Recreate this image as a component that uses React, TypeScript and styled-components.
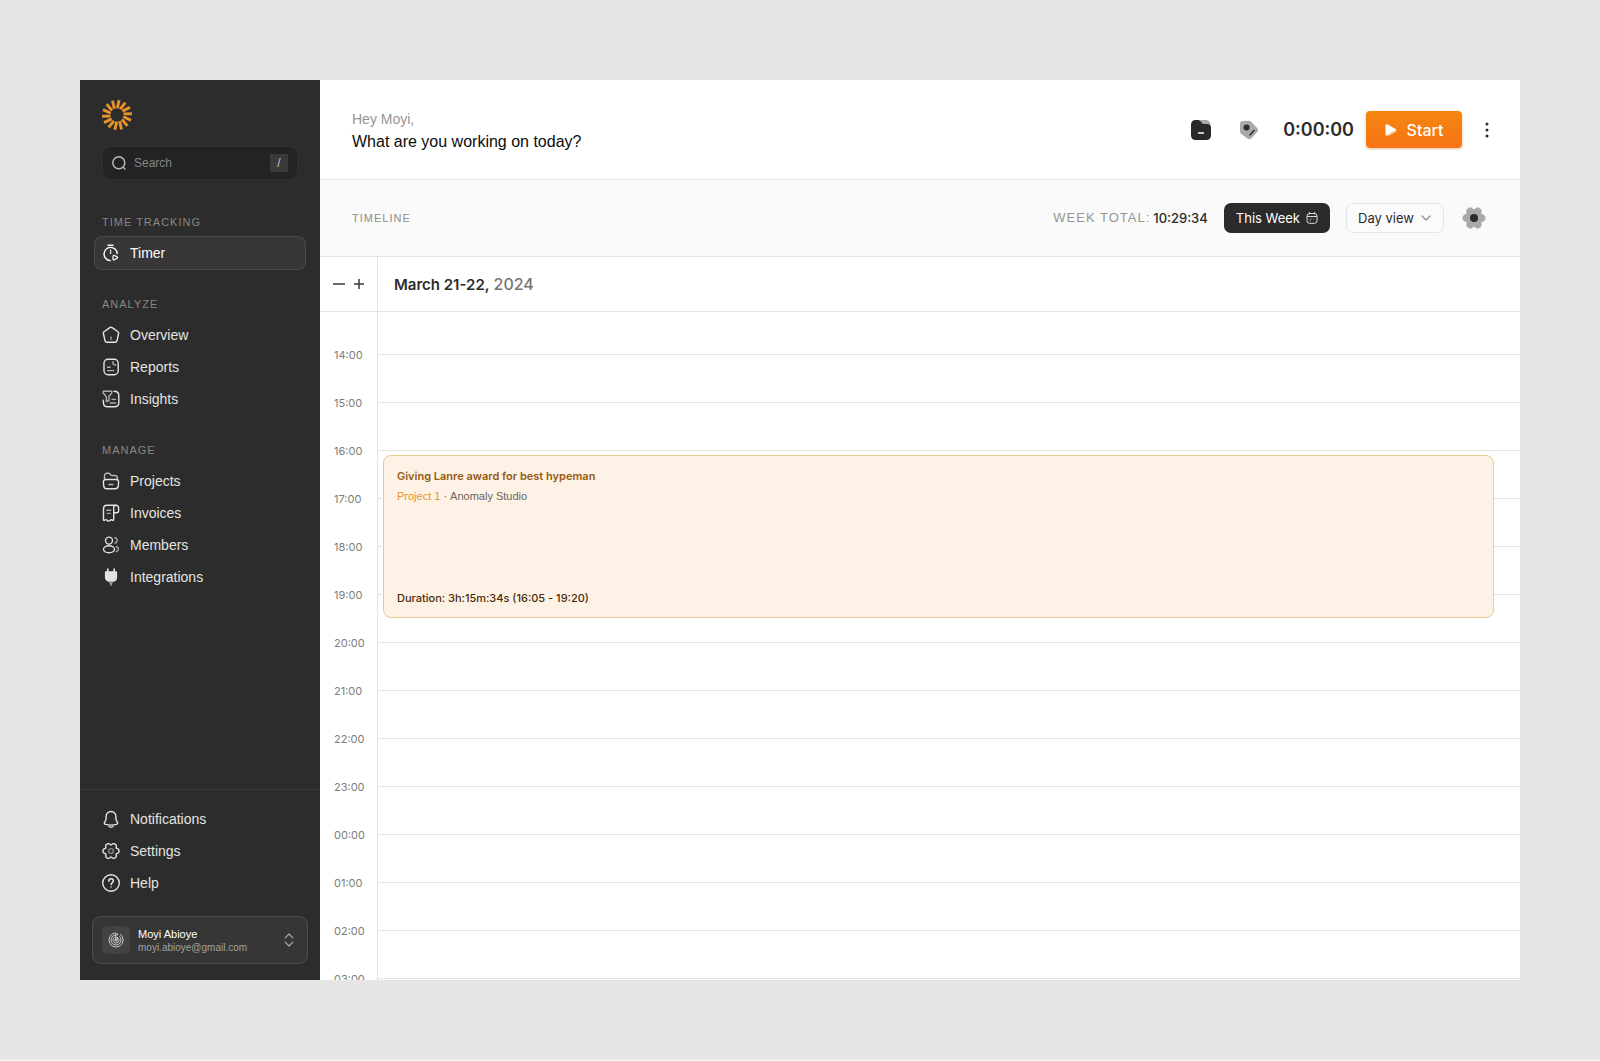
import React from "react";
import styled, { createGlobalStyle, css } from "styled-components";

const sans = `"Liberation Sans", Arial, sans-serif`;
const inter = `Inter, "Liberation Sans", sans-serif`;

const GlobalStyle = createGlobalStyle`
  *, *::before, *::after { box-sizing: border-box; }
  body { margin: 0; background: #fafafa; font-family: ${sans}; color: #2c2c2c; }
  button, input, select { font: inherit; color: inherit; margin: 0; }
  button { padding: 0; border: 0; background: none; cursor: pointer; }
  h1, h2, p { margin: 0; font-weight: 400; }
  svg { display: block; flex-shrink: 0; }
`;

const Page = styled.div`
  height: calc(100vh - 1px);
  padding: 80px;
  background: #e6e6e6;
`;

const Shell = styled.div`
  display: grid;
  grid-template-columns: 240px minmax(0, 1fr);
  height: 100%;
  min-height: 720px;
  overflow: hidden;
  background: #fff;
`;

/* ---------- Sidebar ---------- */

const Sidebar = styled.aside`
  display: flex;
  flex-direction: column;
  min-height: 0;
  padding: 20px 0 16px;
  background: #2c2c2c;
  color: #e4e4e0;
`;

const Brand = styled.a`
  align-self: flex-start;
  margin: 0 22px 16px;
  color: #e8922a;
`;

const SearchBox = styled.label`
  display: flex;
  align-items: center;
  gap: 8px;
  height: 34px;
  margin: 0 22px 34px;
  padding: 0 9px;
  border: 1px solid #313131;
  border-radius: 8px;
  background: #232323;
  color: #b9b9b5;
`;

const SearchInput = styled.input`
  flex: 1;
  min-width: 0;
  padding: 0;
  border: 0;
  outline: 0;
  background: none;
  font-size: 12px;
  line-height: 16px;
  &::placeholder { color: #858582; opacity: 1; }
`;

const Key = styled.kbd`
  width: 18px;
  height: 18px;
  background: #3a3a3a;
  color: #c4c4c0;
  font-family: ${sans};
  font-size: 12px;
  line-height: 18px;
  text-align: center;
`;

const NavGroup = styled.nav`
  display: flex;
  flex-direction: column;
  margin-bottom: 27px;
  padding: 0 15px;
`;

const NavHeading = styled.h2`
  margin-bottom: 7px;
  padding-left: 7px;
  color: #888883;
  font-size: 11px;
  letter-spacing: 1px;
  line-height: 16px;
`;

const NavLink = styled.a<{ $active?: boolean }>`
  display: flex;
  align-items: center;
  gap: 10px;
  height: 32px;
  padding: 0 7px;
  border-radius: 7px;
  color: inherit;
  font-size: 14px;
  line-height: 20px;
  text-decoration: none;
  ${(p) =>
    p.$active &&
    css`
      background: #383636;
      box-shadow: 0 0 0 1px #4a4a49;
      color: #fff;
    `}
`;

const SidebarFooter = styled.div`
  margin-top: auto;
  padding-top: 13px;
  border-top: 1px solid #3b3b3b;
`;

const FooterNav = styled(NavGroup)`
  margin-bottom: 17px;
`;

const Account = styled.button`
  display: flex;
  align-items: center;
  gap: 8px;
  width: calc(100% - 24px);
  height: 48px;
  margin: 0 12px;
  padding: 0 13px 0 9px;
  border: 1px solid #4a4a4a;
  border-radius: 8px;
  background: #363636;
  text-align: left;
`;

const Avatar = styled.span`
  display: grid;
  place-items: center;
  width: 28px;
  height: 28px;
  border-radius: 5px;
  background: #434343;
  color: #cfcfcb;
`;

const AccountText = styled.span`
  display: grid;
  flex: 1;
  min-width: 0;
  padding-top: 2px;
  color: #a3a3a0;
  font-size: 10px;
  line-height: 14px;
`;

const AccountName = styled.span`
  color: #fff;
  font-size: 11px;
`;

/* ---------- Main column ---------- */

const Main = styled.main`
  display: flex;
  flex-direction: column;
  min-width: 0;
  min-height: 0;
`;

const TopBar = styled.header`
  display: flex;
  align-items: center;
  flex-shrink: 0;
  height: 100px;
  padding: 0 20px 0 32px;
  border-bottom: 1px solid #e4e4e4;
`;

const Greeting = styled.div`
  margin-right: auto;
  padding-top: 2px;
`;

const Hello = styled.p`
  color: #959592;
  font-size: 14px;
  line-height: 22px;
`;

const Prompt = styled.h1`
  color: #0c0c0c;
  font-size: 16px;
  line-height: 24px;
`;

const Tools = styled.div`
  display: flex;
  align-items: center;
  gap: 28px;
  margin-right: 24px;
`;

const Clock = styled.time`
  margin-right: 12px;
  font-family: ${inter};
  font-size: 18px;
  font-weight: 600;
  line-height: 24px;
`;

const StartButton = styled.button`
  display: flex;
  align-items: center;
  justify-content: center;
  gap: 10px;
  min-width: 96px;
  height: 37px;
  margin-right: 12px;
  border-radius: 4px;
  background: linear-gradient(#f3860f, #f97415);
  box-shadow: 0 1px 3px rgba(190, 100, 20, 0.4);
  color: #fff;
  font-family: ${inter};
  font-size: 16px;
  font-weight: 500;
`;

const IconButton = styled.button<{ $size: number }>`
  display: grid;
  place-items: center;
  width: ${(p) => p.$size}px;
  height: ${(p) => p.$size}px;
`;

const Toolbar = styled.section`
  display: flex;
  align-items: center;
  gap: 16px;
  flex-shrink: 0;
  height: 77px;
  padding: 0 32px;
  border-bottom: 1px solid #e4e4e4;
  background: #fafafa;
`;

const ToolbarTitle = styled.h2`
  margin-right: auto;
  color: #8e8e8a;
  font-size: 11px;
  letter-spacing: 1px;
  line-height: 16px;
`;

const WeekTotal = styled.p`
  display: flex;
  gap: 3px;
  color: #969692;
  font-size: 13px;
  letter-spacing: 1px;
  line-height: 20px;
`;

const WeekTotalValue = styled.span`
  color: #2c2c2c;
  font-family: ${inter};
  font-weight: 500;
  letter-spacing: normal;
`;

const RangeButton = styled.button`
  display: flex;
  align-items: center;
  justify-content: space-between;
  gap: 6px;
  min-width: 106px;
  height: 30px;
  padding: 0 12px;
  border-radius: 7px;
  background: #2b2b2b;
  color: #fff;
  font-family: ${inter};
  font-size: 13px;
`;

const SelectBox = styled.div`
  display: grid;
  align-items: center;
  min-width: 98px;
  height: 30px;
  border: 1px solid #e6e6e6;
  border-radius: 7px;
  background: #fbfbfb;
  svg { grid-area: 1 / 1; justify-self: end; margin-right: 12px; pointer-events: none; }
`;

const ViewSelect = styled.select`
  grid-area: 1 / 1;
  height: 28px;
  padding: 0 28px 0 11px;
  border: 0;
  outline: 0;
  appearance: none;
  background: none;
  font-family: ${inter};
  font-size: 13px;
`;

const DateRow = styled.section`
  display: grid;
  grid-template-columns: 58px minmax(0, 1fr);
  flex-shrink: 0;
  height: 55px;
  border-bottom: 1px solid #e4e4e4;
`;

const ZoomControls = styled.div`
  display: flex;
  align-items: center;
  justify-content: center;
  gap: 4px;
  border-right: 1px solid #e4e4e4;
`;

const DateTitle = styled.h2`
  display: flex;
  align-items: baseline;
  gap: 4px;
  align-self: center;
  padding-left: 16px;
  font-family: ${inter};
  font-size: 15px;
  font-weight: 600;
  line-height: 24px;
`;

const Year = styled.span`
  color: #777774;
  font-size: 16px;
  font-weight: 500;
`;

const Calendar = styled.section`
  display: grid;
  grid-template-columns: 58px minmax(0, 1fr);
  flex: 1;
  min-height: 0;
  overflow: hidden;
`;

const Hours = styled.div`
  padding-top: 19px;
  border-right: 1px solid #e4e4e4;
`;

const HourLabel = styled.div`
  height: 48px;
  padding-left: 14px;
  color: #7d7d7a;
  font-family: ${inter};
  font-size: 11px;
  line-height: 48px;
`;

const Lanes = styled.div`
  position: relative;
  padding-top: 42px;
`;

const Lane = styled.div`
  height: 48px;
  border-top: 1px solid #e4e4e4;
`;

const EventCard = styled.article`
  position: absolute;
  top: 143px;
  right: 26px;
  left: 5px;
  display: flex;
  flex-direction: column;
  height: 163px;
  padding: 10px 13px 9px;
  border: 1px solid #ebcb94;
  border-radius: 8px;
  background: #fef1e5;
  font-size: 11px;
  line-height: 20px;
`;

const EventTitle = styled.h2`
  color: #955b12;
  font-family: ${inter};
  font-size: 11px;
  font-weight: 600;
`;

const EventMeta = styled.p`
  display: flex;
  gap: 3px;
  color: #6b655e;
`;

const EventProject = styled.span`
  color: #e8922a;
`;

const EventDuration = styled.p`
  margin-top: auto;
  color: #4a2c07;
  font-family: ${inter};
  font-weight: 500;
`;

/* ---------- Icons ---------- */

/* Six broad petals with narrow notches between them. */
function gearPath(cx: number, cy: number, radius: number, depth: number) {
  const steps = 144;
  const points = Array.from({ length: steps }, (_, i) => {
    const a = (i / steps) * Math.PI * 2;
    const r = radius - depth * Math.pow(Math.abs(Math.sin(3 * a)), 4);
    return `${(cx + r * Math.cos(a)).toFixed(2)} ${(cy + r * Math.sin(a)).toFixed(2)}`;
  });
  return `M${points.join("L")}Z`;
}

const Logo = () => (
  <svg width="30" height="30" viewBox="-15 -15 30 30" stroke="currentColor" strokeWidth="2.9">
    {Array.from({ length: 14 }, (_, i) => (
      <path key={i} d="M-.5-6.6L.3-15" transform={`rotate(${7 + (i * 360) / 14})`} />
    ))}
  </svg>
);

const Glyph = ({ children }: { children: React.ReactNode }) => (
  <svg
    width="18"
    height="18"
    viewBox="0 0 18 18"
    fill="none"
    stroke="currentColor"
    strokeWidth="1.4"
    strokeLinecap="round"
    strokeLinejoin="round"
    aria-hidden="true"
  >
    {children}
  </svg>
);

const SearchIcon = () => (
  <svg width="14" height="14" viewBox="0 0 14 14" fill="none" stroke="currentColor" strokeWidth="1.5" strokeLinecap="round">
    <circle cx="6.8" cy="6.8" r="6" />
    <path d="M11.2 11.2L13 13" />
  </svg>
);

const TimerIcon = () => (
  <Glyph>
    <path d="M6 1.200h5M8.200 16.600A6.600 6.600 0 1 1 15.200 9.500" />
    <path d="M8.600 6.200v3.400" opacity=".8" />
    <path d="M11 12.300c0-.9.700-1.200 1.500-.8l2.600 1.400c.7.400.7 1 0 1.400l-2.600 1.500c-.8.400-1.500 0-1.500-.8z" strokeWidth="1.200" />
  </Glyph>
);

const HomeIcon = () => (
  <Glyph>
    <path d="M7.800 1.600L2 5.800c-.7.500-.8 1-.6 1.700l1.600 7.200c.2 1.100.8 1.600 1.900 1.600h8.200c1.100 0 1.700-.5 1.900-1.600l1.600-7.200c.2-.7.1-1.200-.6-1.700l-5.800-4.200c-.9-.6-1.500-.6-2.400 0z" />
    <path d="M9 11v2.600" opacity=".6" />
  </Glyph>
);

const ReportIcon = () => (
  <Glyph>
    <rect x="2" y="1.200" width="14.200" height="15.600" rx="4" />
    <path d="M11 3.600v1.600c0 1.100.6 1.700 1.700 1.700h1.200M5.600 9.200H8M5.600 12.600h6" opacity=".75" />
  </Glyph>
);

const InsightIcon = () => (
  <Glyph>
    <path d="M12 1.200c3.200 0 4.800 1.200 4.800 4.300v7c0 2.900-1.400 4.300-4.300 4.300h-7c-2.900 0-4.100-1.400-4.100-4.300v-2.300" />
    <path d="M1.200 1.200h8.600v1.700L7 6.500v4l-2.600 1.200V6.800L1.200 3zM10 9.400h3.600M8.200 13h5.400" opacity=".7" />
  </Glyph>
);

const ProjectIcon = () => (
  <Glyph>
    <path d="M2.500 7.500V4c0-1.700.9-2.700 2.600-2.700h1.300c1.200 0 1.500.5 2.100 1.300.5.700.9.900 1.700.9h2.300c2 0 3 .9 3 2.700v1.300" opacity=".75" />
    <path d="M4 7.500h10c1.800 0 2.800 1 2.600 2.800l-.3 3.600c-.2 1.900-1.100 2.800-2.900 2.800H4.600c-1.800 0-2.700-.9-2.900-2.800l-.3-3.600C1.200 8.500 2.200 7.500 4 7.500z" />
    <path d="M7 12.500h4" opacity=".75" />
  </Glyph>
);

const InvoiceIcon = () => (
  <Glyph>
    <path d="M13.800 1.200H5C2.500 1.200 1.500 2.300 1.500 4.800v10.500c0 1.300.5 1.600 1.400.8.800-.7 1.300-.7 2 0l1 .8c.6.400.9.400 1.500 0l1-.8c.700-.6 1.200-.6 2 0 .8.600 1.300.3 1.300-.8V3.400c0-1.500.8-2.200 2.100-2.200z" />
    <path d="M13.800 1.200c1.800 0 2.800 1.100 2.800 2.800v2.700c0 1.300-.8 2-2 2h-2.900" />
    <path d="M4.800 6.300h4M5.300 9.400h3" opacity=".65" />
  </Glyph>
);

const MembersIcon = () => (
  <Glyph>
    <circle cx="7" cy="4.600" r="3.500" />
    <ellipse cx="7" cy="13.300" rx="5.500" ry="3.500" />
    <path d="M12.800 1.800c3 .4 3 4.800 0 5.200M14.200 10.800c3 .5 3 3.800.1 4.700" opacity=".65" />
  </Glyph>
);

const PlugIcon = () => (
  <Glyph>
    <path d="M5.800 1V4M12.200 1V4" strokeWidth="1.600" />
    <path d="M3.600 4h10.800v5.200c0 2.300-1.500 3.800-3.800 3.800H7.400c-2.300 0-3.800-1.500-3.800-3.800z" fill="currentColor" />
    <path d="M6.500 14.200h5L9.800 16v1.800H8.200V16z" fill="currentColor" stroke="none" opacity=".65" />
  </Glyph>
);

const BellIcon = () => (
  <Glyph>
    <path d="M9 1.500a4.900 4.900 0 0 0-4.900 4.900v2.400c0 .6-.2 1.200-.5 1.700l-1 1.700c-.6 1.100-.2 1.900 1 2.200 3.500 1 7.300 1 10.800 0 1.200-.3 1.600-1.200 1-2.200l-1-1.700c-.3-.5-.5-1.100-.5-1.700V6.400A4.900 4.900 0 0 0 9 1.500z" />
    <path d="M7 16.500c1.200.8 2.800.8 4 0" />
  </Glyph>
);

const SettingsIcon = () => (
  <Glyph>
    <path d={gearPath(9, 9, 8, 2)} />
    <circle cx="9" cy="9" r="2.400" opacity=".5" />
  </Glyph>
);

const HelpIcon = () => (
  <Glyph>
    <circle cx="9" cy="9" r="8.300" />
    <path d="M6.800 7.200C6.800 4 11.300 4.200 11.300 7c0 1.800-2.200 1.800-2.200 3.400M9.100 12.900v.1" strokeWidth="1.500" />
  </Glyph>
);

const SpiralIcon = () => (
  <svg width="16" height="16" viewBox="0 0 16 16" fill="none" stroke="currentColor" strokeWidth="1">
    <path d="M8 1a7 7 0 1 0 4 1.200M8 1v7M8 3a5 5 0 1 0 3.500 1.400M8 5a3 3 0 1 0 2.600 1.500M8 8h1.500M9.500 1.300v2M9.500 5v2" />
    <circle cx="8" cy="8" r="1.200" />
  </svg>
);

const SortIcon = () => (
  <svg width="10" height="14" viewBox="0 0 10 14" fill="none" stroke="#aaa" strokeWidth="1.200" strokeLinecap="round" strokeLinejoin="round">
    <path d="M1.200 4.800L5 1l3.800 3.800M1.200 9.200L5 13l3.800-3.800" />
  </svg>
);

const FolderSolidIcon = () => (
  <svg width="20" height="20" viewBox="0 0 20 20">
    <path d="M9 0h5c3.500 0 5.500 1.500 5.500 5V8L10 5z" fill="#aaa" />
    <path d="M0 4.800C0 1.600 1.600 0 4.800 0H7c1.500 0 2 .5 2.900 1.700l1 1.400c.5.700.9.900 1.800.9H16c2.700 0 4 1.300 4 4v7.200c0 3.200-1.600 4.800-4.800 4.800H4.800C1.600 20 0 18.400 0 15.200z" fill="#292929" />
    <path d="M7.500 13h5" stroke="#fff" strokeWidth="1.400" strokeLinecap="round" />
  </svg>
);

const TagIcon = () => (
  <svg width="20" height="20" viewBox="0 0 20 20" strokeLinecap="round" strokeLinejoin="round">
    <path d="M4 4l6-.2 6 6.200-5.800 6.200L4 11.400z" fill="#a9a9a9" stroke="#a9a9a9" strokeWidth="6" />
    <circle cx="7.600" cy="7.400" r="3" fill="#2b2b2b" />
    <path d="M11 15l4-4.400" stroke="#2b2b2b" strokeWidth="1.500" />
  </svg>
);

const PlayIcon = () => (
  <svg width="12" height="12" viewBox="0 0 12 12" fill="#fff">
    <path d="M.5 1.700C.5.400 1.600-.1 2.700.5l8 4.500c.6.400.6.800 0 1.200l-9 5c-.7.400-1.200.1-1.200-.7z" />
    <path d="M1.800 11.200L11.400 6c.3 1-.1 1.700-.9 2.100l-6 3.300c-1.200.7-2.100.6-2.700-.2z" opacity=".6" />
  </svg>
);

const DotsIcon = () => (
  <svg width="4" height="16" viewBox="0 0 4 16" fill="#2b2b2b">
    <circle cx="2" cy="2" r="1.500" />
    <circle cx="2" cy="8" r="1.500" />
    <circle cx="2" cy="14" r="1.500" />
  </svg>
);

const CalendarIcon = () => (
  <svg width="12" height="12" viewBox="0 0 12 12" fill="none" stroke="#ddd" strokeLinecap="round">
    <rect x="1" y="1.500" width="10" height="9.800" rx="2.500" />
    <path d="M3.500.5v1.500M8.500.5v1.500M1.500 4.500h9" />
    <path d="M3.700 7.200h1.800M3.700 9h.8M7.500 7.200h.5" opacity=".5" />
  </svg>
);

const ChevronIcon = () => (
  <svg width="10" height="6" viewBox="0 0 10 6" fill="none" stroke="#8c8c8c" strokeWidth="1.200" strokeLinecap="round" strokeLinejoin="round">
    <path d="M1 1l4 4 4-4" />
  </svg>
);

const GearSolidIcon = () => (
  <svg width="24" height="24" viewBox="0 0 24 24">
    <path d={gearPath(12, 12, 11, 2.800)} fill="#a9a9a7" stroke="#a9a9a7" strokeLinejoin="round" />
    <circle cx="12" cy="12" r="4" fill="#2b2b2b" />
  </svg>
);

const ZoomIcon = ({ plus }: { plus?: boolean }) => (
  <svg width="12" height="12" viewBox="0 0 12 12" stroke="#3a3a3a" strokeWidth="1.500">
    <path d={plus ? "M1 6h10M6 1v10" : "M0 6h12"} />
  </svg>
);

/* ---------- Data ---------- */

type Item = { label: string; icon: React.ReactNode; active?: boolean };

const groups: { title: string; items: Item[] }[] = [
  { title: "TIME TRACKING", items: [{ label: "Timer", icon: <TimerIcon />, active: true }] },
  {
    title: "ANALYZE",
    items: [
      { label: "Overview", icon: <HomeIcon /> },
      { label: "Reports", icon: <ReportIcon /> },
      { label: "Insights", icon: <InsightIcon /> },
    ],
  },
  {
    title: "MANAGE",
    items: [
      { label: "Projects", icon: <ProjectIcon /> },
      { label: "Invoices", icon: <InvoiceIcon /> },
      { label: "Members", icon: <MembersIcon /> },
      { label: "Integrations", icon: <PlugIcon /> },
    ],
  },
];

const footerItems: Item[] = [
  { label: "Notifications", icon: <BellIcon /> },
  { label: "Settings", icon: <SettingsIcon /> },
  { label: "Help", icon: <HelpIcon /> },
];

const hours = Array.from({ length: 14 }, (_, i) => `${String((14 + i) % 24).padStart(2, "0")}:00`);

const NavItems = ({ items }: { items: Item[] }) => (
  <>
    {items.map((item) => (
      <NavLink key={item.label} href="#" $active={item.active} aria-current={item.active ? "page" : undefined}>
        {item.icon}
        {item.label}
      </NavLink>
    ))}
  </>
);

export default function App() {
  return (
    <Page>
      <GlobalStyle />
      <Shell>
        <Sidebar>
          <Brand href="#" aria-label="Home">
            <Logo />
          </Brand>
          <SearchBox>
            <SearchIcon />
            <SearchInput type="search" placeholder="Search" aria-label="Search" />
            <Key>/</Key>
          </SearchBox>
          {groups.map((group) => (
            <NavGroup key={group.title} aria-label={group.title}>
              <NavHeading>{group.title}</NavHeading>
              <NavItems items={group.items} />
            </NavGroup>
          ))}
          <SidebarFooter>
            <FooterNav aria-label="Support">
              <NavItems items={footerItems} />
            </FooterNav>
            <Account type="button">
              <Avatar>
                <SpiralIcon />
              </Avatar>
              <AccountText>
                <AccountName>Moyi Abioye</AccountName>
                <span>moyi.abioye@gmail.com</span>
              </AccountText>
              <SortIcon />
            </Account>
          </SidebarFooter>
        </Sidebar>

        <Main>
          <TopBar>
            <Greeting>
              <Hello>Hey Moyi,</Hello>
              <Prompt>What are you working on today?</Prompt>
            </Greeting>
            <Tools>
              <IconButton type="button" $size={20} aria-label="Choose project">
                <FolderSolidIcon />
              </IconButton>
              <IconButton type="button" $size={20} aria-label="Add tag">
                <TagIcon />
              </IconButton>
            </Tools>
            <Clock>0:00:00</Clock>
            <StartButton type="button">
              <PlayIcon />
              Start
            </StartButton>
            <IconButton type="button" $size={26} aria-label="More options">
              <DotsIcon />
            </IconButton>
          </TopBar>

          <Toolbar>
            <ToolbarTitle>TIMELINE</ToolbarTitle>
            <WeekTotal>
              WEEK TOTAL: <WeekTotalValue>10:29:34</WeekTotalValue>
            </WeekTotal>
            <RangeButton type="button">
              This Week
              <CalendarIcon />
            </RangeButton>
            <SelectBox>
              <ViewSelect aria-label="Calendar view" defaultValue="day">
                <option value="day">Day view</option>
              </ViewSelect>
              <ChevronIcon />
            </SelectBox>
            <IconButton type="button" $size={28} aria-label="Timeline settings">
              <GearSolidIcon />
            </IconButton>
          </Toolbar>

          <DateRow>
            <ZoomControls>
              <IconButton type="button" $size={16} aria-label="Zoom out">
                <ZoomIcon />
              </IconButton>
              <IconButton type="button" $size={16} aria-label="Zoom in">
                <ZoomIcon plus />
              </IconButton>
            </ZoomControls>
            <DateTitle>
              March 21-22, <Year>2024</Year>
            </DateTitle>
          </DateRow>

          <Calendar>
            <Hours>
              {hours.map((hour) => (
                <HourLabel key={hour}>{hour}</HourLabel>
              ))}
            </Hours>
            <Lanes>
              {hours.map((hour) => (
                <Lane key={hour} />
              ))}
              <EventCard>
                <EventTitle>Giving Lanre award for best hypeman</EventTitle>
                <EventMeta>
                  <EventProject>Project 1</EventProject>
                  <span>·</span>
                  <span>Anomaly Studio</span>
                </EventMeta>
                <EventDuration>Duration: 3h:15m:34s (16:05 - 19:20)</EventDuration>
              </EventCard>
            </Lanes>
          </Calendar>
        </Main>
      </Shell>
    </Page>
  );
}
